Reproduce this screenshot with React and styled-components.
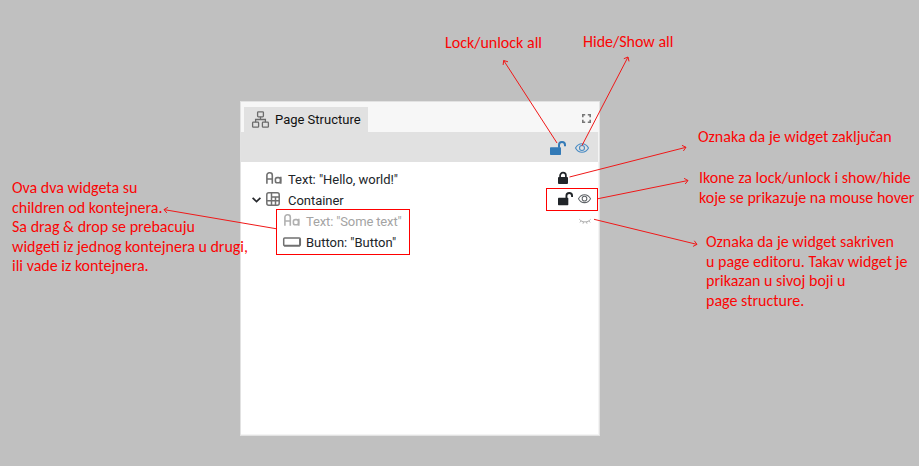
import React from "react";
import styled, { createGlobalStyle } from "styled-components";

const GlobalStyle = createGlobalStyle`
  * { box-sizing: border-box; }
  body { margin: 0; background: #c0c0c0; }
`;

const Board = styled.main`
  position: relative;
  width: 919px;
  height: 466px;
  overflow: hidden;
  background: #c0c0c0;
  padding: 101px 0 0 240px;
`;

const Panel = styled.section`
  display: flex;
  flex-direction: column;
  width: 360px;
  height: 335px;
  background: #fff;
  border: 1px solid #e2e2e2;
  box-shadow: inset -1px -1px 0 #f4f4f4;
  font: 13px Roboto, sans-serif;
  color: #212529;
`;

const TabBar = styled.header`
  display: flex;
  align-items: flex-end;
  justify-content: space-between;
  height: 30px;
  padding: 0 8px 0 3px;
  background: #f7f7f7;
`;

const Tab = styled.div`
  display: flex;
  align-items: center;
  gap: 6px;
  width: 124px;
  height: 25px;
  padding-left: 8px;
  background: #e1e1e1;
  color: #111;
  white-space: nowrap;
`;

const MaximizeButton = styled.div`
  display: flex;
  align-self: center;
  padding-top: 3px;
`;

const Toolbar = styled.div`
  display: flex;
  align-items: center;
  justify-content: flex-end;
  gap: 9px;
  height: 30px;
  margin-right: 1px;
  padding: 2px 9px 0 0;
  background: #e1e1e1;
`;

const Tree = styled.ul`
  display: flex;
  flex-direction: column;
  margin: 0;
  padding: 6px 0 0;
  list-style: none;
`;

const Row = styled.li`
  display: flex;
  align-items: center;
  height: 21px;
  padding: 1px 8px 0 ${(p) => 8 + p.$depth * 18}px;
  color: ${(p) => (p.$hidden ? "#a4a4a4" : "#212529")};
  letter-spacing: ${(p) => (p.$hidden ? "-0.14px" : "-0.03px")};
`;

const Slot = styled.span`
  display: flex;
  align-items: center;
  justify-content: ${(p) => (p.$center ? "center" : "flex-start")};
  flex: none;
  width: ${(p) => p.$w}px;
  height: 20px;
  padding-bottom: ${(p) => p.$lift || 0}px;
`;

const Label = styled.span`
  flex: 1;
  white-space: nowrap;
`;

const Icon = styled.svg`
  display: block;
  flex: none;
  overflow: visible;
`;

const Note = styled.p`
  position: absolute;
  left: ${(p) => p.$x}px;
  top: ${(p) => p.$y}px;
  margin: 0;
  color: #fb0505;
  font: 16px/19.5px Carlito, Calibri, Lato, sans-serif;
  white-space: pre;
`;

const Highlight = styled.div`
  position: absolute;
  left: ${(p) => p.$x}px;
  top: ${(p) => p.$y}px;
  width: ${(p) => p.$w}px;
  height: ${(p) => p.$h}px;
  border: 1px solid #f00;
`;

const ArrowLayer = styled.svg`
  position: absolute;
  inset: 0;
  pointer-events: none;
`;

const StructureIcon = () => (
  <Icon width="17" height="17" viewBox="0 0 17 17" fill="none" stroke="#6b6b6b" strokeWidth="1.3">
    <rect x="5.6" y="0.8" width="5.8" height="5" rx="0.8" />
    <rect x="0.6" y="11.2" width="6" height="5" rx="0.8" />
    <rect x="10.4" y="11.2" width="6" height="5" rx="0.8" />
    <path d="M8.5 5.8v2.7M3.6 11.2V8.5h9.8v2.7" />
  </Icon>
);

const MaximizeIcon = () => (
  <Icon width="9" height="9" viewBox="0 0 9 9" fill="none" stroke="#777" strokeWidth="1.6">
    <path d="M.8 3.2V.8h2.4M5.8.8h2.4v2.4M8.2 5.8v2.4H5.800M3.200 8.200H.8V5.800" />
  </Icon>
);

const UnlockIcon = ({ color, size = 16 }) => (
  <Icon width={size} height={(size * 14) / 16} viewBox="0 0 16 14" fill="none">
    <rect x="0" y="6.2" width="11" height="7.8" rx="0.7" fill={color} />
    <path d="M9 6.7V4a3 3 0 0 1 6 0v1.300" stroke={color} strokeWidth="2" />
  </Icon>
);

const LockIcon = () => (
  <Icon width="10" height="12" viewBox="0 0 10 12" fill="none">
    <rect x="0" y="5" width="10" height="7" rx="0.9" fill="#212529" />
    <path d="M2.100 5.5V3.6a2.900 2.900 0 0 1 5.800 0v1.900" stroke="#212529" strokeWidth="1.700" />
  </Icon>
);

const EyeIcon = ({ color, size = 14 }) => (
  <Icon width={size} height={(size * 10) / 14} viewBox="0 0 14 10" fill="none" stroke={color} strokeWidth="1.1">
    <path d="M.5 5C2 2.2 4.2.7 7 .7S12 2.2 13.5 5C12 7.8 9.800 9.300 7 9.300S2 7.800.5 5Z" />
    <circle cx="7" cy="5" r="2.500" />
  </Icon>
);

const ClosedEyeIcon = () => (
  <Icon width="12" height="5" viewBox="0 0 12 5" fill="none" stroke="#a4a4a4" strokeWidth="0.9">
    <path d="M.4.3C1.800 2 3.700 2.900 6 2.900S10.200 2 11.600.3M2.200 1.900L.9 3.400M4.500 2.800L4 4.700M7.500 2.800L8 4.700M9.800 1.900l1.300 1.500" />
  </Icon>
);

const TextIcon = ({ color }) => (
  <Icon width="16" height="12" viewBox="0 0 16 12" fill="none" stroke={color} strokeWidth="1.600">
    <path d="M.9 11.700V3.200A2.400 2.400 0 0 1 3.300.8h.6a2.400 2.400 0 0 1 2.400 2.400v8.500M.9 7h5.400" />
    <rect x="9.400" y="5.600" width="5" height="5.200" rx="1.800" />
    <path d="M14.800 4.800v6.900" />
  </Icon>
);

const ContainerIcon = () => (
  <Icon width="14" height="14" viewBox="0 0 14 14" fill="none" stroke="#707070" strokeWidth="1.500">
    <rect x=".8" y=".8" width="12.400" height="12.400" rx="2" />
    <path d="M5.500 .8v12.400M5.500 5h7.700M.8 8.800h12.400M9.500 5v8.200" />
  </Icon>
);

const ButtonIcon = () => (
  <Icon width="18" height="10" viewBox="0 0 18 10" fill="none" stroke="#707070">
    <rect x=".7" y=".9" width="16.600" height="7.800" rx="1" strokeWidth="1.500" />
    <path d="M1 8.600h16M17 2v6" strokeWidth="1.900" />
  </Icon>
);

const Chevron = () => (
  <Icon width="9" height="6" viewBox="0 0 9 6" fill="none" stroke="#26282c" strokeWidth="1.700">
    <path d="M.6.8l3.900 3.700L8.400.8" />
  </Icon>
);

const arrows = [
  [557, 143, 503.7, 60.5],
  [582, 145.5, 628, 57],
  [569.5, 177, 686, 147.3],
  [598, 198.7, 688, 180.5],
  [594, 219.3, 697, 244.4],
  [276, 228.7, 164, 209.6],
];

const notes = [
  [445, 33, "Lock/unlock all"],
  [583, 32, "Hide/Show all"],
  [698, 127, "Oznaka da je widget zaključan"],
  [699, 168, "Ikone za lock/unlock i show/hide\nkoje se prikazuje na mouse hover"],
  [706, 232, "Oznaka da je widget sakriven\nu page editoru. Takav widget je\nprikazan u sivoj boji u\npage structure."],
  [12, 178, "Ova dva widgeta su\nchildren od kontejnera.\nSa drag & drop se prebacuju\nwidgeti iz jednog kontejnera u drugi,\nili vade iz kontejnera."],
];

const arrowHead = (x1, y1, x2, y2) => {
  const angle = Math.atan2(y2 - y1, x2 - x1);
  const barb = (turn) =>
    `${x2 - 4.5 * Math.cos(angle + turn)} ${y2 - 4.5 * Math.sin(angle + turn)}`;
  return `M${barb(0.7)}L${x2} ${y2}L${barb(-0.7)}`;
};

export default function App() {
  return (
    <>
      <GlobalStyle />
      <Board>
        <Panel>
          <TabBar>
            <Tab>
              <StructureIcon />
              Page Structure
            </Tab>
            <MaximizeButton>
              <MaximizeIcon />
            </MaximizeButton>
          </TabBar>
          <Toolbar>
            <UnlockIcon color="#337ab7" />
            <EyeIcon color="#4a8cc4" />
          </Toolbar>
          <Tree>
            <Row $depth={0}>
              <Slot $w={17} />
              <Slot $w={22} $lift={2}><TextIcon color="#707070" /></Slot>
              <Label>Text: "Hello, world!"</Label>
              <Slot $w={33} $lift={2}><LockIcon /></Slot>
            </Row>
            <Row $depth={0}>
              <Slot $w={17} $lift={1}><Slot $w={14} $center><Chevron /></Slot></Slot>
              <Slot $w={22} $lift={2}><ContainerIcon /></Slot>
              <Label>Container</Label>
              <Slot $w={20} $lift={2}><UnlockIcon color="#212529" size={15} /></Slot>
              <Slot $w={13} $lift={2}><EyeIcon color="#606468" size={13} /></Slot>
            </Row>
            <Row $depth={1} $hidden>
              <Slot $w={17} />
              <Slot $w={22} $lift={2}><TextIcon color="#b0b0b0" /></Slot>
              <Label>Text: "Some text"</Label>
              <Slot $w={13} $center><ClosedEyeIcon /></Slot>
            </Row>
            <Row $depth={1}>
              <Slot $w={16} />
              <Slot $w={23}><ButtonIcon /></Slot>
              <Label>Button: "Button"</Label>
            </Row>
          </Tree>
        </Panel>

        <Highlight $x={276} $y={209} $w={134} $h={46} />
        <Highlight $x={546} $y={188} $w={52} $h={23} />
        <ArrowLayer width="919" height="466" fill="none" stroke="#f01818" strokeWidth="1">
          {arrows.map(([x1, y1, x2, y2]) => (
            <path key={x1} d={`M${x1} ${y1}L${x2} ${y2}${arrowHead(x1, y1, x2, y2)}`} />
          ))}
        </ArrowLayer>
        {notes.map(([x, y, text]) => (
          <Note key={text} $x={x} $y={y}>{text}</Note>
        ))}
      </Board>
    </>
  );
}
